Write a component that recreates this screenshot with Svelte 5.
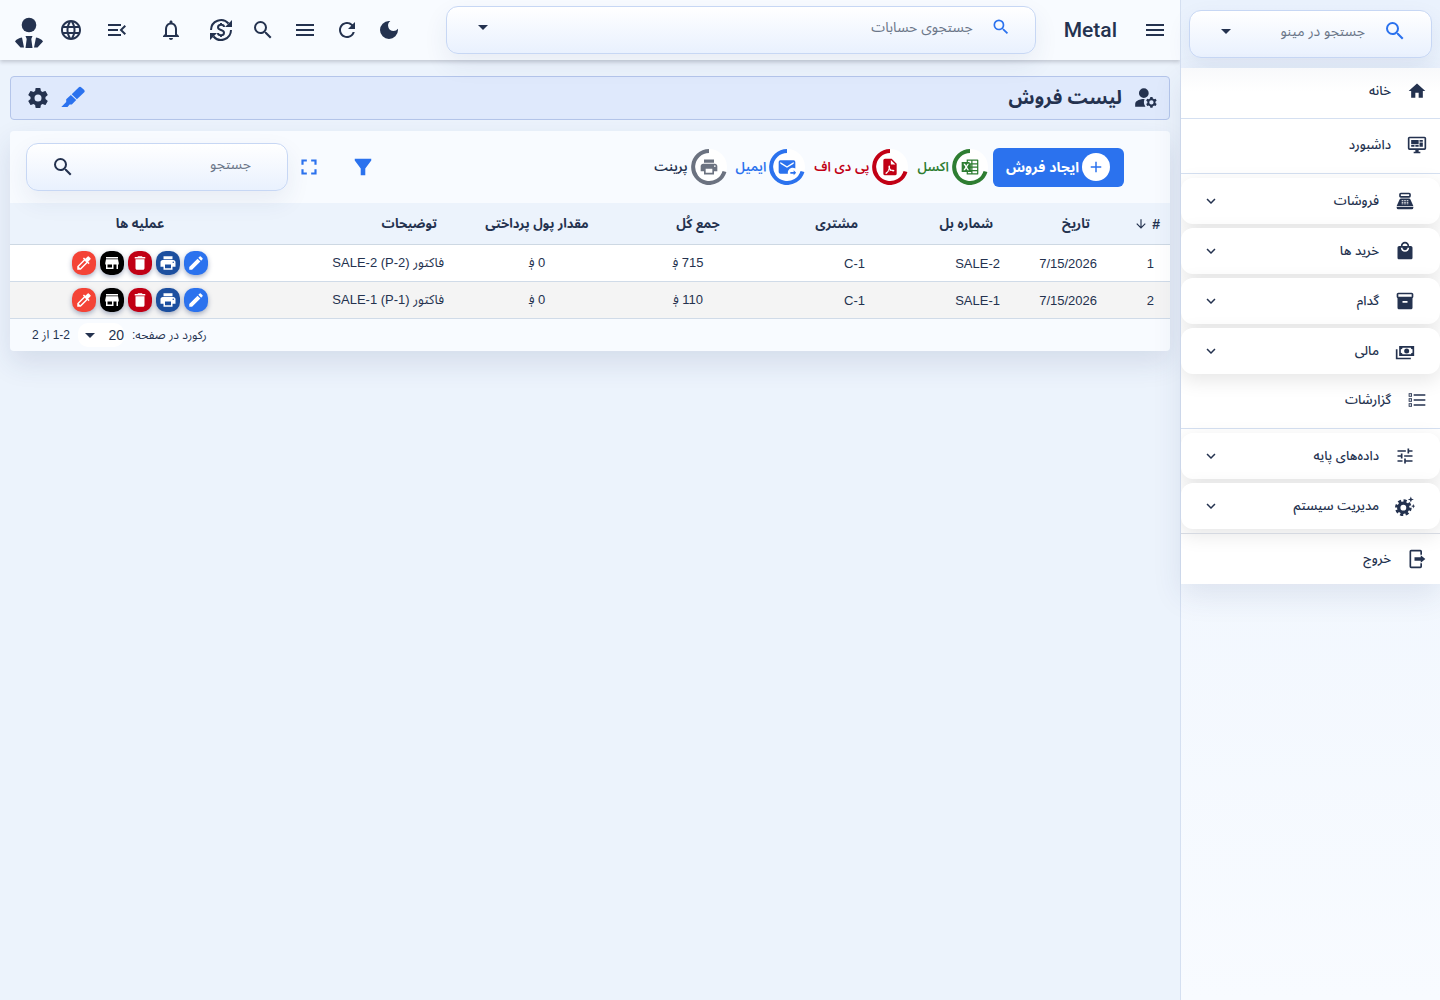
<script lang="ts">
	const icons: Record<string, string> = {
		menu: 'M3 18h18v-2H3v2zm0-5h18v-2H3v2zm0-7v2h18V6H3z',
		search:
			'M15.5 14h-.79l-.28-.27A6.47 6.47 0 0 0 16 9.5 6.5 6.5 0 1 0 9.5 16c1.61 0 3.09-.59 4.23-1.57l.27.28v.79l5 4.99L20.49 19l-4.99-5zm-6 0C7.01 14 5 11.99 5 9.5S7.01 5 9.5 5 14 7.01 14 9.5 11.99 14 9.5 14z',
		moon: 'M12 3a9 9 0 1 0 9 9c0-.46-.04-.92-.1-1.36a5.389 5.389 0 0 1-4.4 2.26 5.403 5.403 0 0 1-3.14-9.8c-.44-.06-.9-.1-1.36-.1z',
		refresh:
			'M17.65 6.35A7.958 7.958 0 0 0 12 4c-4.42 0-7.99 3.58-7.99 8s3.57 8 7.99 8c3.73 0 6.84-2.55 7.73-6h-2.08A5.99 5.99 0 0 1 12 18c-3.31 0-6-2.69-6-6s2.69-6 6-6c1.66 0 3.14.69 4.22 1.78L13 11h7V4l-2.35 2.35z',
		bell: 'M12 22c1.1 0 2-.9 2-2h-4c0 1.1.89 2 2 2zm6-6v-5c0-3.07-1.64-5.64-4.5-6.32V4c0-.83-.67-1.5-1.5-1.5s-1.5.67-1.5 1.5v.68C7.63 5.36 6 7.92 6 11v5l-2 2v1h16v-1l-2-2zm-2 1H8v-6c0-2.48 1.51-4.5 4-4.5s4 2.02 4 4.5v6z',
		menuOpen:
			'M3 18h13v-2H3v2zm0-5h10v-2H3v2zm0-7v2h13V6H3zm18 9.59L17.42 12 21 8.41 19.59 7l-5 5 5 5L21 15.59z',
		globe:
			'M11.99 2C6.47 2 2 6.48 2 12s4.47 10 9.99 10C17.52 22 22 17.52 22 12S17.52 2 11.99 2zm6.93 6h-2.95a15.65 15.65 0 0 0-1.38-3.56A8.03 8.03 0 0 1 18.92 8zM12 4.04c.83 1.2 1.48 2.53 1.91 3.96h-3.82c.43-1.43 1.08-2.76 1.91-3.96zM4.26 14C4.1 13.36 4 12.69 4 12s.1-1.36.26-2h3.38c-.08.66-.14 1.32-.14 2s.06 1.34.14 2H4.26zm.82 2h2.95c.32 1.25.78 2.45 1.38 3.56A7.987 7.987 0 0 1 5.08 16zm2.95-8H5.08a7.987 7.987 0 0 1 4.33-3.56A15.65 15.65 0 0 0 8.03 8zM12 19.96c-.83-1.2-1.48-2.53-1.91-3.96h3.82c-.43 1.43-1.08 2.76-1.91 3.96zM14.34 14H9.66c-.09-.66-.16-1.32-.16-2s.07-1.35.16-2h4.68c.09.65.16 1.32.16 2s-.07 1.34-.16 2zm.25 5.56c.6-1.11 1.06-2.31 1.38-3.56h2.95a8.03 8.03 0 0 1-4.33 3.56zM16.36 14c.08-.66.14-1.32.14-2s-.06-1.34-.14-2h3.38c.16.64.26 1.31.26 2s-.1 1.36-.26 2h-3.38z',
		caret: 'M7 10l5 5 5-5z',
		chevron: 'M7.41 8.59 12 13.17l4.59-4.58L18 10l-6 6-6-6z',
		gear: 'M12 15.5a3.5 3.5 0 1 1 0-7 3.5 3.5 0 0 1 0 7m7.43-2.53c.04-.32.07-.64.07-.97s-.03-.66-.07-1l2.11-1.63c.19-.15.24-.42.12-.64l-2-3.46c-.12-.22-.39-.31-.61-.22l-2.49 1c-.52-.39-1.06-.73-1.69-.98l-.37-2.65A.506.506 0 0 0 14 2h-4c-.25 0-.46.18-.5.42l-.37 2.65c-.63.25-1.17.59-1.69.98l-2.49-1c-.22-.09-.49 0-.61.22l-2 3.46c-.13.22-.07.49.12.64L4.57 11c-.04.34-.07.67-.07 1s.03.65.07.97l-2.11 1.66c-.19.15-.25.42-.12.64l2 3.46c.12.22.39.3.61.22l2.49-1.01c.52.4 1.06.74 1.69.99l.37 2.65c.04.24.25.42.5.42h4c.25 0 .46-.18.5-.42l.37-2.65c.63-.26 1.17-.59 1.69-.99l2.49 1.01c.22.08.49 0 .61-.22l2-3.46c.12-.22.07-.49-.12-.64z',
		marker:
			'M17.6 1.5a2 2 0 0 1 2.8 0l2.6 2.3a2 2 0 0 1 0 2.8l-7.1 6.6-5.2-5zM9.9 8.9l5.3 5.2-4.4 4.5H8.6L6.5 20.9H.3l4.9-4.8v-2.8z',
		userGear:
			'M10 3a4.5 4.5 0 1 0 0 9 4.5 4.5 0 0 0 0-9zm.7 10.01c-2.5-.1-4.9.5-7.1 1.8C2.6 15.4 2 16.5 2 17.7V20h9.5a7 7 0 0 1-.8-6.99zM20.75 16c0-.22-.03-.42-.06-.63l1.14-1.01-1-1.73-1.45.49a3.65 3.65 0 0 0-1.08-.63L18 11h-2l-.3 1.49c-.4.15-.76.36-1.08.63l-1.45-.49-1 1.73 1.14 1.01c-.03.21-.06.41-.06.63s.03.42.06.63l-1.14 1.01 1 1.73 1.45-.49c.32.27.68.48 1.08.63L16 21h2l.3-1.49c.4-.15.76-.36 1.08-.63l1.45.49 1-1.73-1.14-1.01c.03-.21.06-.41.06-.63zM17 18a2 2 0 1 1 0-4 2 2 0 0 1 0 4z',
		home: 'M10 20v-6h4v6h5v-8h3L12 3 2 12h3v8z',
		dashboard:
			'M21 16V4H3v12h18m0-14a2 2 0 0 1 2 2v12a2 2 0 0 1-2 2h-7v2h2v2H8v-2h2v-2H3a2 2 0 0 1-2-2V4c0-1.11.89-2 2-2h18M5 6h9v5H5V6m10 0h4v2h-4V6m4 3v5h-4V9h4M5 12h4v2H5v-2m5 0h4v2h-4v-2z',
		till: 'M17 2H7a2 2 0 0 0-2 2v2c0 1.1.9 2 2 2h10a2 2 0 0 0 2-2V4a2 2 0 0 0-2-2zm0 4H7V4h10v2zm3 16H4a2 2 0 0 1-2-2v-1h20v1a2 2 0 0 1-2 2zM18.53 10.19A2 2 0 0 0 16.7 9H7.3a2 2 0 0 0-1.83 1.19L2 18h20l-3.47-7.81zM8 15h2v1H8zm0-2h2v1H8zm0-2h2v1H8zm3 4h2v1h-2zm0-2h2v1h-2zm0-2h2v1h-2zm3 4h2v1h-2zm0-2h2v1h-2zm0-2h2v1h-2z',
		bag: 'M19 6h-2c0-2.76-2.24-5-5-5S7 3.24 7 6H5c-1.1 0-1.99.9-1.99 2L3 20c0 1.1.9 2 2 2h14c1.1 0 2-.9 2-2V8c0-1.1-.9-2-2-2zm-7-3c1.66 0 3 1.34 3 3H9c0-1.66 1.34-3 3-3zm0 10c-2.76 0-5-2.24-5-5h2c0 1.66 1.34 3 3 3s3-1.34 3-3h2c0 2.76-2.24 5-5 5z',
		box: 'M20 2H4c-1 0-2 .9-2 2v3.01c0 .72.43 1.34 1 1.69V20c0 1.1 1.1 2 2 2h14c.9 0 2-.9 2-2V8.7c.57-.35 1-.97 1-1.69V4c0-1.1-1-2-2-2zm-5 12H9v-2h6v2zm5-7H4V4h16v3z',
		cash: 'M5 6h18v12H5V6m9 3a3 3 0 1 1 0 6 3 3 0 0 1 0-6M9 8a2 2 0 0 1-2 2v4a2 2 0 0 1 2 2h10a2 2 0 0 1 2-2v-4a2 2 0 0 1-2-2H9m-8 2h2v10h16v2H1V10z',
		list: 'M8 5h14v2H8zm0 6h14v2H8zm0 6h14v2H8zM2 4h4v4H2zm1 1v2h2V5zM2 10h4v4H2zm1 1v2h2v-2zM2 16h4v4H2zm1 1v2h2v-2z',
		tune: 'M3 17v2h6v-2H3zM3 5v2h10V5H3zm10 16v-2h8v-2h-8v-2h-2v6h2zM7 9v2H3v2h4v2h2V9H7zm14 4v-2H11v2h10zm-6-4h2V7h4V5h-4V3h-2v6z',
		sparks:
			'M19 .5l1 2.7 2.7 1-2.7 1-1 2.7-1-2.7-2.7-1 2.7-1zM22 9.5l.7 2 1.8.7-1.8.7-.7 2-.7-2-1.8-.7 1.8-.7z',
		exit: 'M5 1h11a2 2 0 0 1 2 2v4h-2V3H5v18h11v-4h2v4a2 2 0 0 1-2 2H5a2 2 0 0 1-2-2V3a2 2 0 0 1 2-2zm11.5 6.5L22 12l-5.5 4.5v-2.5H9v-4h7.5z',
		filter: 'M3 3h18v2l-6.5 8.5V21h-5v-7.5L3 5z',
		fullscreen: 'M7 14H5v5h5v-2H7v-3zm-2-4h2V7h3V5H5v5zm12 7h-3v2h5v-5h-2v3zM14 5v2h3v3h2V5h-5z',
		plus: 'M19 13h-6v6h-2v-6H5v-2h6V5h2v6h6z',
		excel:
			'M21 3H8v3H2v12h6v3h13a1 1 0 0 0 1-1V4a1 1 0 0 0-1-1zM4 8h2l1.5 2.6L9 8h1.8l-2.4 4 2.4 4H9l-1.5-2.6L6 16H4l2.5-4zm5.5-3.5h4v3h-2V6h-2zM15 4.5h5.5v3H15zM15 9h5.5v2.5H15zM13 9h.5v2.5H13zM15 13h5.5v2.5H15zM13 13h.5v2.5H13zM15 17h5.5v2.5H15zM9.5 18h4v1.5h-4z',
		pdf: 'M14 2H6a2 2 0 0 0-2 2v16a2 2 0 0 0 2 2h12a2 2 0 0 0 2-2V8l-6-6zm-1 7V3.5L18.5 9H13zm-2.5 1.5c1.3-.8 2 .6 1.4 2.7.5 1 1.1 1.7 1.9 2.1 2-.2 3.5.1 3.5 1.1 0 1.3-2.1 1.2-3.8.1-1.1.2-2.2.5-3.3 1-1.4 2.4-2.7 3.4-3.4 2.7-.8-.9.4-2.1 2.2-3.1.6-1.2 1.1-2.4 1.4-3.5-.4-1.5-.4-2.6.1-3.1zm.6 4.6-.8 1.6 1.8-.5z',
		mail: 'M13 19c0-3.31 2.69-6 6-6 1.1 0 2.12.3 3 .81V6a2 2 0 0 0-2-2H4a2 2 0 0 0-2 2v12a2 2 0 0 0 2 2h9.09c-.06-.33-.09-.66-.09-1M4 6l8 5 8-5v2l-8 5-8-5V6m16 16v-2h-4v-2h4v-2l3 3-3 3z',
		print:
			'M19 8H5c-1.66 0-3 1.34-3 3v6h4v4h12v-4h4v-6c0-1.66-1.34-3-3-3zm-3 11H8v-5h8v5zm3-7c-.55 0-1-.45-1-1s.45-1 1-1 1 .45 1 1-.45 1-1 1zm-1-9H6v4h12V3z',
		edit: 'M3 17.25V21h3.75L17.81 9.94l-3.75-3.75L3 17.25zM20.71 7.04a1 1 0 0 0 0-1.41l-2.34-2.34a1 1 0 0 0-1.41 0l-1.83 1.83 3.75 3.75 1.83-1.83z',
		trash: 'M6 19c0 1.1.9 2 2 2h8c1.1 0 2-.9 2-2V7H6v12zM19 4h-3.5l-1-1h-5l-1 1H5v2h14V4z',
		store: 'M20 4H4v2h16V4zm1 10v-2l-1-5H4l-1 5v2h1v6h10v-6h4v6h2v-6h1zm-9 4H6v-4h6v4z',
		dropper:
			'M20.71 5.63l-2.34-2.34a1 1 0 0 0-1.41 0l-3.12 3.12-1.93-1.91-1.41 1.41 1.42 1.42L3 16.25V21h4.75l8.92-8.92 1.42 1.42 1.41-1.41-1.92-1.92 3.12-3.12a1 1 0 0 0 .01-1.42zM6.92 19 5 17.08l8.06-8.06 1.92 1.92L6.92 19z',
		arrowDown: 'M20 12l-1.41-1.41L13 16.17V4h-2v12.17l-5.58-5.59L4 12l8 8z'
	};

	const menu = [
		{ label: 'خانه', icon: 'home', first: true },
		{ label: 'داشبورد', icon: 'dashboard' },
		{ label: 'فروشات', icon: 'till', group: true },
		{ label: 'خرید ها', icon: 'bag', group: true },
		{ label: 'گدام', icon: 'box', group: true },
		{ label: 'مالی', icon: 'cash', group: true },
		{ label: 'گزارشات', icon: 'list' },
		{ label: 'داده‌های پایه', icon: 'tune', group: true },
		{ label: 'مدیریت سیستم', icon: 'sparks', group: true },
		{ label: 'خروج', icon: 'exit', last: true }
	];

	const exports = [
		{ label: 'اکسل', icon: 'excel', kind: 'green' },
		{ label: 'پی دی اف', icon: 'pdf', kind: 'red' },
		{ label: 'ایمیل', icon: 'mail', kind: 'blue' },
		{ label: 'پرینت', icon: 'print', kind: 'grey' }
	];

	const rows = [
		{ id: 1, date: '7/15/2026', bill: 'SALE-2', customer: 'C-1', total: '715 ؋', paid: '0 ؋', note: 'فاکتور SALE-2 (P-2)' },
		{ id: 2, date: '7/15/2026', bill: 'SALE-1', customer: 'C-1', total: '110 ؋', paid: '0 ؋', note: 'فاکتور SALE-1 (P-1)' }
	];

	const actions = [
		{ icon: 'edit', label: 'ویرایش' },
		{ icon: 'print', label: 'پرینت' },
		{ icon: 'trash', label: 'حذف' },
		{ icon: 'store', label: 'گدام' },
		{ icon: 'dropper', label: 'رنگ' }
	];
</script>

{#snippet icon(name: string, size = 24)}
	<svg class="icon" viewBox="0 0 24 24" width={size} height={size} aria-hidden="true">
		<path fill-rule="evenodd" d={icons[name]} />
		{#if name === 'sparks'}
			<circle class="cog" cx="10" cy="14" r="5.5" />
			<circle class="cog teeth" cx="10" cy="14" r="8" />
		{/if}
	</svg>
{/snippet}

<div class="app" dir="rtl" lang="fa">
	<aside class="sidebar">
		<div class="menu-search">
			<label class="search-box">
				<span class="blue">{@render icon('search')}</span>
				<input type="text" placeholder="جستجو در مینو" />
				{@render icon('caret')}
			</label>
		</div>
		<nav>
			{#each menu as item}
				{#if item.group}
					<button class="group">
						{@render icon(item.icon, 20)}
						<span>{item.label}</span>
						{@render icon('chevron', 18)}
					</button>
				{:else}
					<a class="link" class:first={item.first} class:last={item.last} href="#{item.icon}">
						{@render icon(item.icon, 20)}
						<span>{item.label}</span>
					</a>
				{/if}
			{/each}
		</nav>
	</aside>

	<div class="main">
		<header class="topbar">
			<button class="plain" aria-label="مینو">{@render icon('menu')}</button>
			<strong class="brand">Metal</strong>
			<label class="search-box accounts">
				<span class="blue">{@render icon('search', 20)}</span>
				<input type="text" placeholder="جستجوی حسابات" />
				{@render icon('caret')}
			</label>
			<div class="tools">
				<button aria-label="حالت شب">{@render icon('moon')}</button>
				<button aria-label="تازه کردن">{@render icon('refresh')}</button>
				<button aria-label="لیست">{@render icon('menu')}</button>
				<button aria-label="جستجو">{@render icon('search')}</button>
				<button aria-label="اسعار">
					<svg class="line" viewBox="0 0 24 24" width="24" height="24" aria-hidden="true">
						<path d="M2 12a10 10 0 0 1 17.5-6.5M22 12a10 10 0 0 1-17.5 6.5" />
						<path class="solid" d="M23 2v7h-7zM1 22v-7h7z" />
						<path d="M15 9c0-1.5-1.3-2.3-3-2.3S9 7.5 9 9.2s1.3 2.3 3 2.8 3 1.2 3 2.8-1.3 2.5-3 2.5-3-.8-3-2.3M12 5v2M12 17v2" />
					</svg>
				</button>
				<button class="bell" aria-label="اعلانات">{@render icon('bell')}</button>
				<button class="collapse" aria-label="جمع کردن">{@render icon('menuOpen')}</button>
				<button aria-label="زبان">{@render icon('globe')}</button>
				<button aria-label="حساب">
					<svg class="icon" viewBox="0 0 28 36" width="28" height="36" aria-hidden="true">
						<circle cx="14" cy="13" r="7.3" />
						<path d="M10.5 24h7l-1.2 3 1.2 9h-7l1.2-9zM7 25.5l2 10H5.5L0 29.5c1-2 4-3.5 7-4zM21 25.5l-2 10h3.5l5.5-6c-1-2-4-3.5-7-4z" />
					</svg>
				</button>
			</div>
		</header>

		<main>
			<section class="title-bar">
				{@render icon('userGear', 26)}
				<h1>لیست فروش</h1>
				<button class="plain blue" aria-label="رنگ">{@render icon('marker')}</button>
				<button class="plain" aria-label="تنظیمات">{@render icon('gear')}</button>
			</section>

			<section class="card">
				<div class="toolbar">
					<button class="create"><span class="plus">{@render icon('plus', 18)}</span>ایجاد فروش</button>
					{#each exports as item}
						<button class="export {item.kind}">
							<span class="ring">
								<svg class="arc" viewBox="0 0 36 36" aria-hidden="true">
									<path d="M18 2A16 16 0 1 0 33.5 22.5" />
								</svg>
								{@render icon(item.icon, 20)}
							</span>
							<span>{item.label}</span>
						</button>
					{/each}
					<div class="filters">
						<button class="plain blue" aria-label="فلتر">{@render icon('filter', 22)}</button>
						<button class="plain blue" aria-label="تمام صفحه">{@render icon('fullscreen', 26)}</button>
					</div>
					<label class="search-box list-search">
						<input type="text" placeholder="جستجو" />
						{@render icon('search')}
					</label>
				</div>

				<table>
					<colgroup>
						<col class="c-id" />
						<col class="c-date" />
						<col class="c-bill" />
						<col class="c-customer" />
						<col class="c-total" />
						<col class="c-paid" />
						<col class="c-note" />
						<col class="c-actions" />
					</colgroup>
					<thead>
						<tr>
							<th class="id"><span>#</span>{@render icon('arrowDown', 14)}</th>
							<th>تاریخ</th>
							<th>شماره بل</th>
							<th>مشتری</th>
							<th class="total">جمع کُل</th>
							<th class="center">مقدار پول پرداختی</th>
							<th>توضیحات</th>
							<th class="center">عملیه ها</th>
						</tr>
					</thead>
					<tbody>
						{#each rows as row}
							<tr>
								<td class="id">{row.id}</td>
								<td>{row.date}</td>
								<td>{row.bill}</td>
								<td>{row.customer}</td>
								<td class="center">{row.total}</td>
								<td class="center">{row.paid}</td>
								<td>{row.note}</td>
								<td class="center">
									<div class="actions">
										{#each actions as action}
											<button class="action {action.icon}" aria-label={action.label}>
												{@render icon(action.icon, 18)}
											</button>
										{/each}
									</div>
								</td>
							</tr>
						{/each}
					</tbody>
				</table>

				<footer class="pager">
					<label for="per-page">رکورد در صفحه:</label>
					<div class="select">
						<select id="per-page">
							<option>20</option>
							<option>50</option>
						</select>
						{@render icon('caret')}
					</div>
					<span>1-2 از 2</span>
				</footer>
			</section>
		</main>
	</div>
</div>

<style>
	:global(body) {
		background: #ecf3fc;
	}

	.app {
		display: flex;
		min-height: 100vh;
		font-family: 'Liberation Sans', 'Noto Sans Arabic', sans-serif;
		font-size: 13px;
		color: #24324f;
	}

	button,
	input,
	select {
		font: inherit;
		color: inherit;
		border: 0;
		padding: 0;
		background: none;
		outline: none;
	}

	.icon {
		display: block;
		flex: none;
		fill: currentColor;
	}

	.cog {
		fill: none;
		stroke: currentColor;
		stroke-width: 4;
	}

	.cog.teeth {
		stroke-dasharray: 3.6 2.683;
	}

	.plain {
		display: flex;
	}

	.blue {
		color: #2b72ee;
	}

	.search-box {
		display: flex;
		align-items: center;
		box-sizing: border-box;
		height: 48px;
		padding: 0 24px 6px;
		border: 1px solid #c7d7f4;
		border-radius: 12px;
		background: linear-gradient(#fff, #e9f1fe);
		box-shadow: 0 10px 24px rgba(40, 60, 110, 0.08);
	}

	.search-box input {
		flex: 1;
		min-width: 0;
		height: 32px;
		margin: 0 18px;
		font-size: 14px;
	}

	.search-box input::placeholder {
		color: #6b7688;
		opacity: 1;
	}

	/* Sidebar */
	.sidebar {
		position: relative;
		z-index: 1;
		flex: none;
		box-sizing: border-box;
		width: 260px;
		border-left: 1px solid #d5e0f1;
		background: linear-gradient(#eaf2fd, #f8fbff);
	}

	.menu-search {
		padding: 10px 8px;
	}

	nav {
		overflow: hidden;
		background: #fff;
		box-shadow: 0 12px 28px rgba(40, 60, 110, 0.1);
	}

	.link {
		display: flex;
		align-items: center;
		gap: 16px;
		box-sizing: border-box;
		height: 55px;
		padding: 0 13px 2px;
		border-bottom: 1px solid #d5e0f1;
		font-weight: 500;
		color: inherit;
		text-decoration: none;
	}

	.link.first {
		height: 51px;
		padding-bottom: 4px;
		background: linear-gradient(#f8f9fb, #fff 24px);
	}

	.group + .link {
		height: 51px;
		padding-bottom: 6px;
	}

	.group + .link.last {
		padding-bottom: 0;
		border-top: 1px solid #d5d9e1;
		border-bottom: 0;
	}

	.group {
		display: flex;
		align-items: center;
		gap: 16px;
		box-sizing: border-box;
		width: 100%;
		height: 46px;
		margin: 4px 0;
		padding: 0 25px 0 21px;
		border-radius: 12px;
		background: #fff;
		box-shadow: 0 6px 20px rgba(0, 0, 0, 0.1);
		font-weight: 500;
		text-align: start;
	}

	.group span {
		flex: 1;
	}

	/* Top bar */
	.main {
		flex: 1;
		min-width: 0;
	}

	.topbar {
		display: flex;
		align-items: center;
		height: 60px;
		padding: 0 13px 0 8px;
		background: #f8fbff;
		box-shadow: 0 2px 4px rgba(40, 40, 60, 0.22);
	}

	.brand {
		margin: 0 26px 0 28px;
		font-family: Roboto, sans-serif;
		font-size: 21px;
		font-weight: 500;
	}

	.accounts {
		flex: 1;
	}

	.tools {
		display: flex;
		margin-right: 36px;
	}

	.tools button {
		display: flex;
		align-items: center;
		justify-content: center;
		width: 42px;
		height: 42px;
	}

	.tools .bell {
		margin-right: 8px;
	}

	.tools .collapse {
		margin: 0 12px 0 4px;
	}

	.line {
		fill: none;
		stroke: currentColor;
		stroke-width: 2;
	}

	.line .solid {
		fill: currentColor;
		stroke: none;
	}

	/* Page */
	main {
		padding: 16px 10px;
	}

	.title-bar {
		display: flex;
		align-items: center;
		gap: 11px;
		box-sizing: border-box;
		height: 44px;
		padding: 0 10px 0 15px;
		border: 1px solid #b4c5ea;
		border-radius: 4px;
		background: #dfe9fc;
	}

	h1 {
		flex: 1;
		margin: 0;
		font-size: 19px;
		line-height: 30px;
	}

	.card {
		margin-top: 11px;
		overflow: hidden;
		border-radius: 4px;
		background: #f8fbff;
		box-shadow: 0 12px 28px rgba(40, 60, 110, 0.12);
	}

	.toolbar {
		display: flex;
		align-items: center;
		height: 72px;
		padding: 0 46px 0 16px;
	}

	.create {
		display: flex;
		align-items: center;
		gap: 3px;
		height: 39px;
		margin-left: 5px;
		padding: 0 14px 0 13px;
		border-radius: 6px;
		background: #2b72ee;
		color: #fff;
		font-size: 14px;
		font-weight: 700;
	}

	.plus {
		display: grid;
		place-items: center;
		width: 28px;
		height: 28px;
		border-radius: 50%;
		background: #fff;
		color: #2b72ee;
	}

	.export {
		display: flex;
		align-items: center;
		gap: 3px;
		margin-left: 9px;
		font-weight: 600;
	}

	.ring {
		display: grid;
		place-items: center;
		width: 36px;
		height: 36px;
		border-radius: 50%;
		background: #fff;
	}

	.ring > :global(*) {
		grid-area: 1 / 1;
	}

	.arc {
		width: 36px;
		height: 36px;
		fill: none;
		stroke: currentColor;
		stroke-width: 4;
	}

	.green {
		color: #2e7d32;
	}

	.red {
		color: #c10015;
	}

	.grey .ring {
		color: #6b7280;
	}

	.filters {
		display: flex;
		align-items: center;
		gap: 30px;
		margin: 0 auto 0 8px;
	}

	.list-search {
		width: 262px;
		padding-bottom: 0;
	}

	.list-search input {
		margin-right: 12px;
		padding-bottom: 6px;
	}

	/* Table */
	table {
		width: 100%;
		border-collapse: separate;
		border-spacing: 0;
		table-layout: fixed;
	}

	.c-id {
		width: 64px;
	}

	.c-date {
		width: 97px;
	}

	.c-bill {
		width: 135px;
	}

	.c-customer {
		width: 119px;
	}

	.c-total {
		width: 134px;
	}

	.c-paid {
		width: 168px;
	}

	.c-note {
		width: 183px;
	}

	.c-actions {
		width: 260px;
	}

	th {
		height: 41px;
		padding: 0 16px 0 0;
		border-bottom: 1px solid #cdd8e3;
		background: #ecf3fc;
		font-weight: 700;
		text-align: start;
		white-space: nowrap;
	}

	th.id {
		padding-right: 10px;
	}

	th.id :global(*) {
		display: inline-block;
		vertical-align: middle;
	}

	th.id span {
		margin-left: 4px;
		font-size: 14px;
	}

	td {
		height: 36px;
		padding: 0 9px 0 0;
		border-bottom: 1px solid #d0dbe8;
		background: #fff;
		white-space: nowrap;
	}

	td.id {
		padding-right: 16px;
	}

	tbody tr:nth-child(even) td {
		background: #f4f4f4;
	}

	.center {
		padding: 0;
		text-align: center;
	}

	.total {
		padding: 0 0 0 20px;
		text-align: center;
	}

	.actions {
		display: flex;
		justify-content: center;
		gap: 4px;
	}

	.action {
		display: grid;
		place-items: center;
		width: 24px;
		height: 24px;
		border-radius: 10px;
		background: #2b72ee;
		color: #fff;
		box-shadow: 0 2px 5px rgba(40, 60, 110, 0.4);
	}

	.action.print {
		background: #1c4f9f;
	}

	.action.trash {
		background: #c10015;
	}

	.action.store {
		background: #000;
	}

	.action.dropper {
		background: #f44336;
	}

	.pager {
		display: flex;
		align-items: center;
		justify-content: flex-end;
		gap: 8px;
		height: 32px;
		padding-left: 22px;
		font-size: 12px;
	}

	.select {
		display: flex;
		align-items: center;
		height: 24px;
		border-radius: 10px;
		background: #fff;
	}

	.select select {
		appearance: none;
		width: 22px;
		font-size: 14px;
	}
</style>
